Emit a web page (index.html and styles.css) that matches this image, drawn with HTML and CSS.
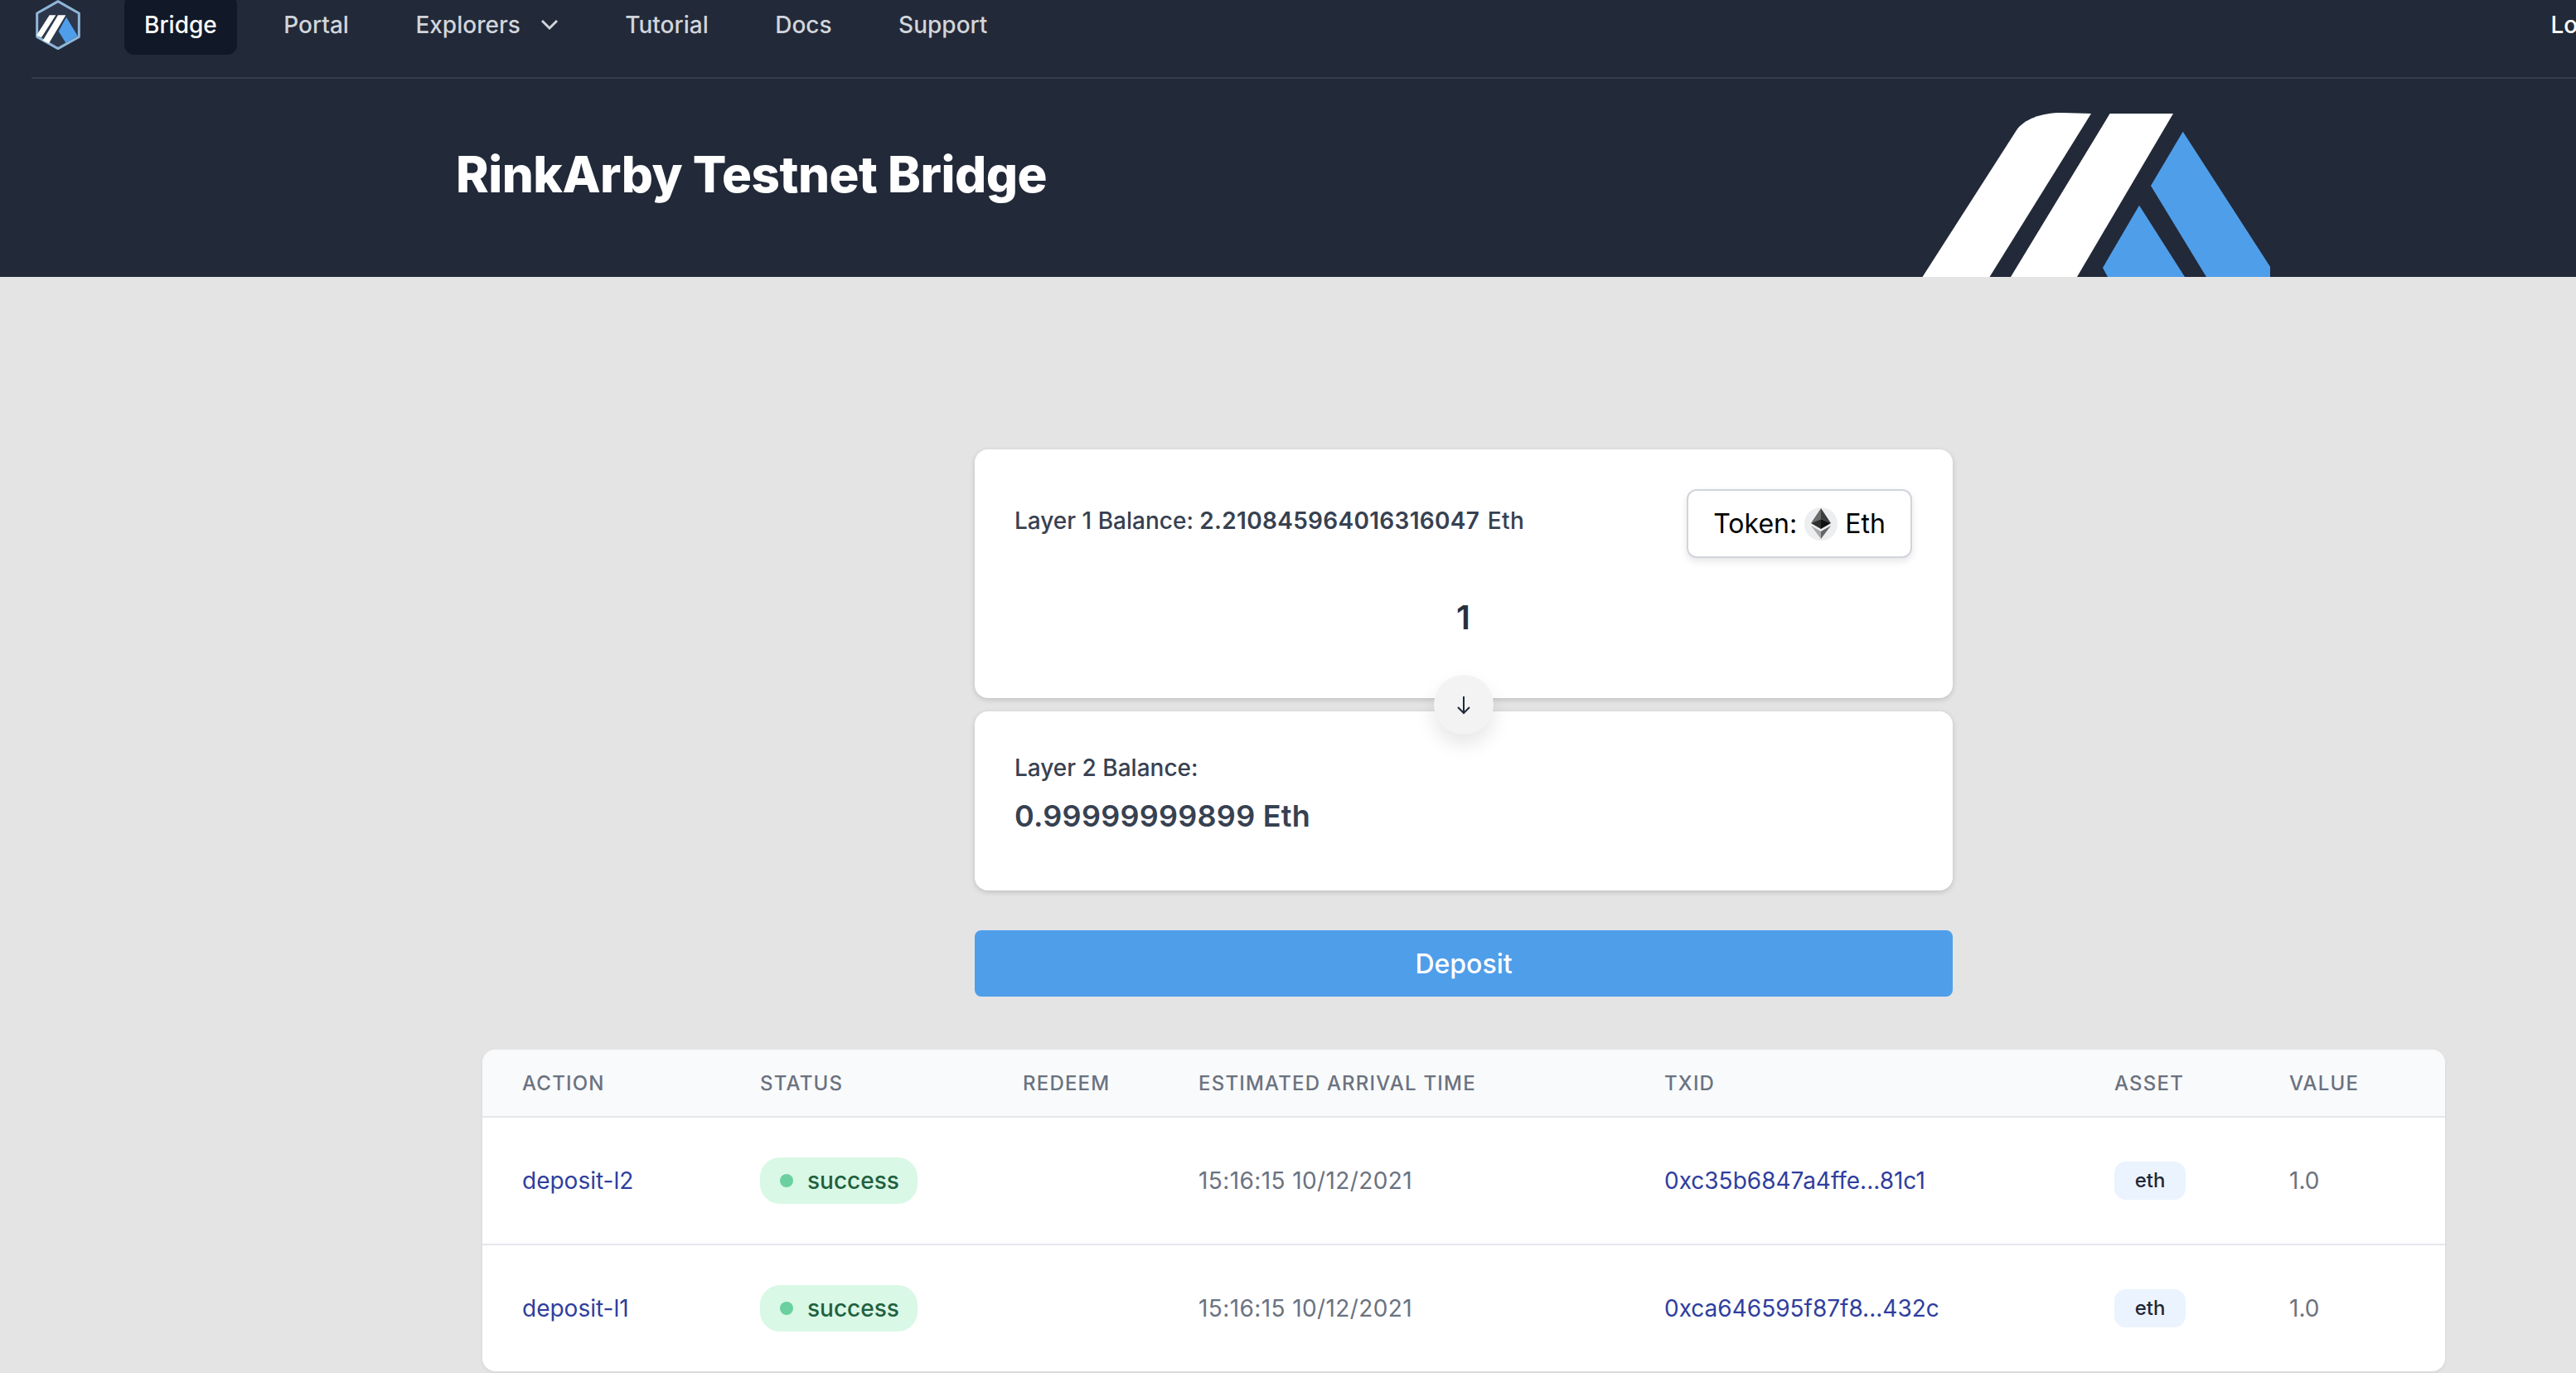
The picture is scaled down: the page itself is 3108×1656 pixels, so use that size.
FILE: index.html
```html
<!DOCTYPE html>
<html lang="en">
<head>
    <meta charset="UTF-8">
    <meta name="viewport" content="width=device-width, initial-scale=1.0">
    <title>RinkArby Testnet Bridge</title>
    <link rel="stylesheet" href="styles.css">
</head>
<body>
    <header class="header">
        <nav class="nav">
            <svg class="nav-logo" viewBox="70 0 160 180">
                <path d="M150 5 L226 48 V133 L150 176 L74 133 V48 Z" fill="#2d374b" stroke="#8fb6d8" stroke-width="9" stroke-linejoin="round"/>
                <path d="M119 55 H142 L90 136 L72 128 Z" fill="#fff"/>
                <path d="M150 55 H178 L117 157 L95 146 Z" fill="#fff"/>
                <path d="M180 62 L221 130 L178 155 L152 113 Z" fill="#4f9eea"/>
            </svg>
            <a class="nav-item active">Bridge</a>
            <a class="nav-item">Portal</a>
            <a class="nav-item">Explorers
                <svg class="chevron" viewBox="0 0 22 14"><path d="M2 2 L11 11 L20 2" fill="none" stroke="#d1d5db" stroke-width="3"/></svg>
            </a>
            <a class="nav-item">Tutorial</a>
            <a class="nav-item">Docs</a>
            <a class="nav-item">Support</a>
            <a class="nav-item login">Log in</a>
        </nav>
        <div class="hero">
            <h1 class="title">RinkArby Testnet Bridge</h1>
            <svg class="hero-logo" viewBox="0 0 500 198">
                <path d="M69.5 198 L183 21 C192 8 212 0 238 0 L273 1 L150.5 198 Z" fill="#fff"/>
                <path d="M295.6 1 H372 L256 198 H176 Z" fill="#fff"/>
                <path d="M383.7 22.7 L489 185.7 V198 H412 L345 88 Z" fill="#4f9eea"/>
                <path d="M331 111.7 L386 198 H293 L287 187 Z" fill="#4f9eea"/>
            </svg>
        </div>
    </header>

    <main class="main">
        <section class="transfer">
            <div class="cards">
                <div class="card card-from">
                    <div class="card-top">
                        <p class="balance">Layer 1 Balance: <strong>2.210845964016316047</strong> <span class="unit">Eth</span></p>
                        <button class="token-btn">Token:
                            <svg class="eth-icon" viewBox="0 0 40 40">
                                <circle cx="20" cy="20" r="20" fill="#eceef0"/>
                                <polygon points="20,1 8,19 20,14" fill="#6b6b6b"/>
                                <polygon points="20,1 32,19 20,14" fill="#3c3c3c"/>
                                <polygon points="8,19 20,14 20,26" fill="#2f2f2f"/>
                                <polygon points="32,19 20,14 20,26" fill="#111"/>
                                <polygon points="8,22 20,29 20,38" fill="#aaa"/>
                                <polygon points="32,22 20,29 20,38" fill="#666"/>
                            </svg>
                            Eth</button>
                    </div>
                    <div class="amount">1</div>
                </div>
                <div class="arrow-btn">
                    <svg class="arrow" viewBox="0 0 20 24"><path d="M10 2 V22 M3 15 L10 22 L17 15" fill="none" stroke="#1f2937" stroke-width="2"/></svg>
                </div>
                <div class="card card-to">
                    <p class="balance">Layer 2 Balance:</p>
                    <p class="balance-big">0.99999999899 Eth</p>
                </div>
            </div>
            <button class="deposit">Deposit</button>
        </section>

        <table class="tx-table">
            <colgroup>
                <col class="col-action"><col class="col-status"><col class="col-redeem"><col class="col-time"><col class="col-txid"><col class="col-asset"><col class="col-value">
            </colgroup>
            <thead>
                <tr>
                    <th>Action</th>
                    <th>Status</th>
                    <th>Redeem</th>
                    <th>Estimated arrival time</th>
                    <th>TxID</th>
                    <th>Asset</th>
                    <th>Value</th>
                </tr>
            </thead>
            <tbody>
                <tr>
                    <td><a class="link">deposit-l2</a></td>
                    <td><span class="status"><i class="dot"></i>success</span></td>
                    <td></td>
                    <td class="time">15:16:15 10/12/2021</td>
                    <td><a class="link">0xc35b6847a4ffe...81c1</a></td>
                    <td><span class="asset">eth</span></td>
                    <td>1.0</td>
                </tr>
                <tr>
                    <td><a class="link">deposit-l1</a></td>
                    <td><span class="status"><i class="dot"></i>success</span></td>
                    <td></td>
                    <td class="time">15:16:15 10/12/2021</td>
                    <td><a class="link">0xca646595f87f8...432c</a></td>
                    <td><span class="asset">eth</span></td>
                    <td>1.0</td>
                </tr>
            </tbody>
        </table>
    </main>
</body>
</html>
```

FILE: styles.css
```css
html, body {
    margin: 0;
    height: 1656px;
    overflow: hidden;
}

body {
    width: 3108px;
    font-family: Inter, "Liberation Sans", sans-serif;
    background-color: #e4e4e4;
}

p, h1 {
    margin: 0;
}

.header {
    height: 334px;
    background: #222938;
    overflow: hidden;
}

.nav {
    display: flex;
    align-items: center;
    width: 3145px;
    height: 95px;
    box-sizing: border-box;
    margin-left: 38px;
    border-bottom: 2px solid #353c4a;
    padding-bottom: 33px;
}

.nav-logo {
    width: 54px;
    height: 60px;
    margin: 0 53px 0 5px;
    flex-shrink: 0;
}

.nav-item {
    display: flex;
    align-items: center;
    height: 72px;
    padding: 0 24px;
    margin-right: 32.5px;
    font-size: 28px;
    font-weight: 500;
    line-height: 40px;
    color: #d1d5db;
    border-radius: 12px;
}

.nav-item.active {
    background: #111827;
    color: #fff;
}

.nav-item.login {
    margin-left: auto;
    margin-right: 0;
    color: #fff;
}

.chevron {
    width: 22px;
    height: 14px;
    margin-left: 24px;
}

.hero {
    display: flex;
    height: 239px;
}

.title {
    align-self: center;
    margin: 0 0 9px 550px;
    font-size: 60px;
    font-weight: 800;
    letter-spacing: -0.5px;
    line-height: 72px;
    color: #fff;
}

.hero-logo {
    width: 500px;
    height: 198px;
    margin: 41px 358px 0 auto;
    flex-shrink: 0;
}

.main {
    width: 3532px;
    display: flex;
    flex-direction: column;
    align-items: center;
    padding-top: 208px;
}

.transfer {
    width: 1180px;
}

.cards {
    position: relative;
}

.card {
    background: #fff;
    border-radius: 16px;
    box-shadow: 0 2px 6px rgba(0, 0, 0, 0.16);
    padding-left: 48px;
    padding-right: 49px;
    color: #374151;
}

.card-from {
    height: 300px;
    box-sizing: border-box;
    padding-top: 48px;
    margin-bottom: 16px;
}

.card-to {
    height: 216px;
    box-sizing: border-box;
    padding-top: 48px;
}

.card-top {
    display: flex;
    justify-content: space-between;
    align-items: flex-start;
}

.balance {
    font-size: 28px;
    font-weight: 500;
    line-height: 40px;
}

.card-top .balance {
    margin-top: 18px;
}

.balance strong {
    font-weight: 600;
    letter-spacing: 0.3px;
}

.balance .unit {
    margin-left: 2px;
    font-weight: 500;
    letter-spacing: 0.5px;
}

.token-btn {
    display: flex;
    align-items: center;
    justify-content: center;
    gap: 9px;
    width: 272px;
    height: 83px;
    padding: 0;
    background: #fff;
    border: 2px solid #d1d5db;
    border-radius: 12px;
    box-shadow: 0 4px 10px rgba(0, 0, 0, 0.1);
    font-family: inherit;
    font-size: 32px;
    font-weight: 400;
    color: #000;
}

.eth-icon {
    width: 40px;
    height: 40px;
}

.amount {
    margin-top: 42px;
    font-size: 40px;
    font-weight: 600;
    line-height: 60px;
    text-align: center;
    color: #27303f;
}

.balance-big {
    margin-top: 10px;
    font-size: 36px;
    font-weight: 600;
    letter-spacing: 0.25px;
    line-height: 56px;
}

.arrow-btn {
    position: absolute;
    top: 272px;
    left: 554px;
    display: flex;
    align-items: center;
    justify-content: center;
    width: 72px;
    height: 72px;
    border-radius: 50%;
    background: #f3f3f4;
    box-shadow: 0 12px 24px rgba(0, 0, 0, 0.1);
}

.arrow {
    width: 20px;
    height: 24px;
}

.deposit {
    display: block;
    width: 100%;
    height: 80px;
    margin-top: 48px;
    border: 0;
    border-radius: 8px;
    background: #4f9eea;
    font-family: inherit;
    font-size: 32px;
    font-weight: 500;
    color: #fff;
}

.tx-table {
    width: 2368px;
    margin-top: 64px;
    table-layout: fixed;
    border-collapse: separate;
    border-spacing: 0;
    background: #fff;
    border-radius: 16px;
    overflow: hidden;
    box-shadow: 0 2px 4px rgba(0, 0, 0, 0.06);
}

.col-action { width: 287px; }
.col-status { width: 317px; }
.col-redeem { width: 212px; }
.col-time { width: 562px; }
.col-txid { width: 543px; }
.col-asset { width: 211px; }
.col-value { width: 236px; }

.tx-table th {
    height: 80px;
    padding: 0 0 0 48px;
    background: #f9fafb;
    border-bottom: 2px solid #e5e7eb;
    font-size: 24px;
    font-weight: 500;
    letter-spacing: 0.05em;
    text-align: left;
    text-transform: uppercase;
    color: #6b7280;
}

.tx-table td {
    height: 152px;
    padding: 0 0 0 48px;
    font-size: 28px;
    line-height: 40px;
    color: #6b7280;
}

.tx-table tbody tr:first-child td {
    border-bottom: 2px solid #e5e7eb;
}

.tx-table td.time {
    letter-spacing: 0.4px;
}

.link {
    color: #2f3e9e;
}

.status {
    display: inline-flex;
    align-items: center;
    width: 190px;
    height: 56px;
    box-sizing: border-box;
    padding-left: 24px;
    border-radius: 24px;
    background: #d9f8e5;
    font-weight: 500;
    color: #1f6040;
}

.dot {
    width: 16px;
    height: 16px;
    margin-right: 17px;
    border-radius: 50%;
    background: #6bd09f;
}

.asset {
    display: inline-flex;
    align-items: center;
    justify-content: center;
    width: 86px;
    height: 46px;
    border-radius: 14px;
    background: #ebf3fe;
    font-size: 24px;
    font-weight: 500;
    color: #1f2937;
}
```
